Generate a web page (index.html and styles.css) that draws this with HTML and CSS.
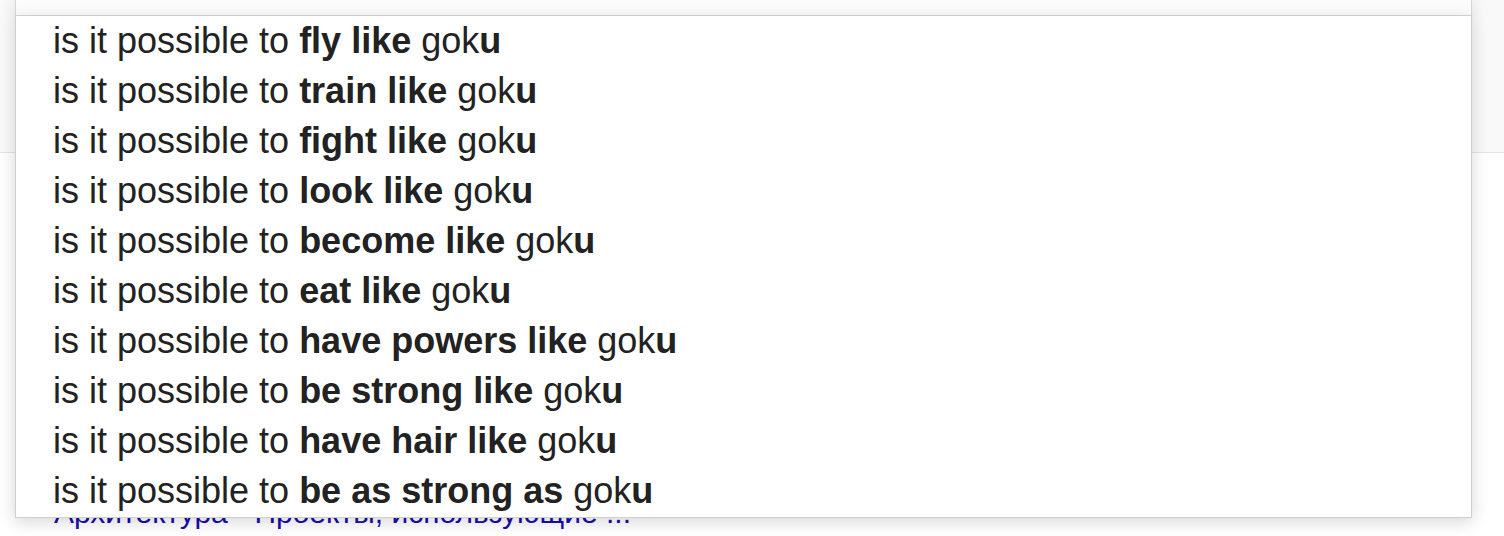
FILE: index.html
```html
<!DOCTYPE html>
<html lang="en">
<head>
<meta charset="utf-8">
<title>Suggestions</title>
<link rel="stylesheet" href="styles.css">
</head>
<body>
<div class="page">
  <header class="top">
    <div class="search"></div>
  </header>
  <main class="results">
    <a class="title" href="#">Архитектура - Проекты, использующие ...</a>
  </main>
  <ul class="suggest">
    <li>is it possible to <b>fly like</b> gok<b>u</b></li>
    <li>is it possible to <b>train like</b> gok<b>u</b></li>
    <li>is it possible to <b>fight like</b> gok<b>u</b></li>
    <li>is it possible to <b>look like</b> gok<b>u</b></li>
    <li>is it possible to <b>become like</b> gok<b>u</b></li>
    <li>is it possible to <b>eat like</b> gok<b>u</b></li>
    <li>is it possible to <b>have powers like</b> gok<b>u</b></li>
    <li>is it possible to <b>be strong like</b> gok<b>u</b></li>
    <li>is it possible to <b>have hair like</b> gok<b>u</b></li>
    <li>is it possible to <b>be as strong as</b> gok<b>u</b></li>
  </ul>
</div>
</body>
</html>
```

FILE: styles.css
```css
html, body {
  margin: 0;
  padding: 0;
  background: #ffffff;
  overflow: hidden;
}

.page {
  position: relative;
  width: 1504px;
  height: 536px;
  font-family: "Liberation Sans", Arial, sans-serif;
}

.top {
  height: 152px;
  background: #f9f9f9;
  border-bottom: 1px solid #e4e4e4;
}

.search {
  margin-left: 15px;
  width: 1455px;
  height: 15px;
  background: #fcfcfc;
  border: 1px solid #d6d6d6;
  border-top: 0;
  box-shadow: 0 2px 16px rgba(0, 0, 0, 0.14);
}

.results {
  padding: 342px 0 0 54px;
}

.title {
  font-size: 30px;
  line-height: 36px;
  color: #1a0dab;
  text-decoration: none;
}

.suggest {
  position: absolute;
  top: 16px;
  left: 15px;
  width: 1455px;
  margin: 0;
  padding: 0 0 1px;
  list-style: none;
  background: #ffffff;
  border: 1px solid #cfcfcf;
  border-top: 0;
  box-shadow: 0 4px 16px rgba(0, 0, 0, 0.16);
}

.suggest li {
  height: 50px;
  line-height: 50px;
  padding-left: 37px;
  font-size: 36px;
  color: #222222;
  white-space: nowrap;
}

.suggest b {
  font-weight: bold;
}
```
